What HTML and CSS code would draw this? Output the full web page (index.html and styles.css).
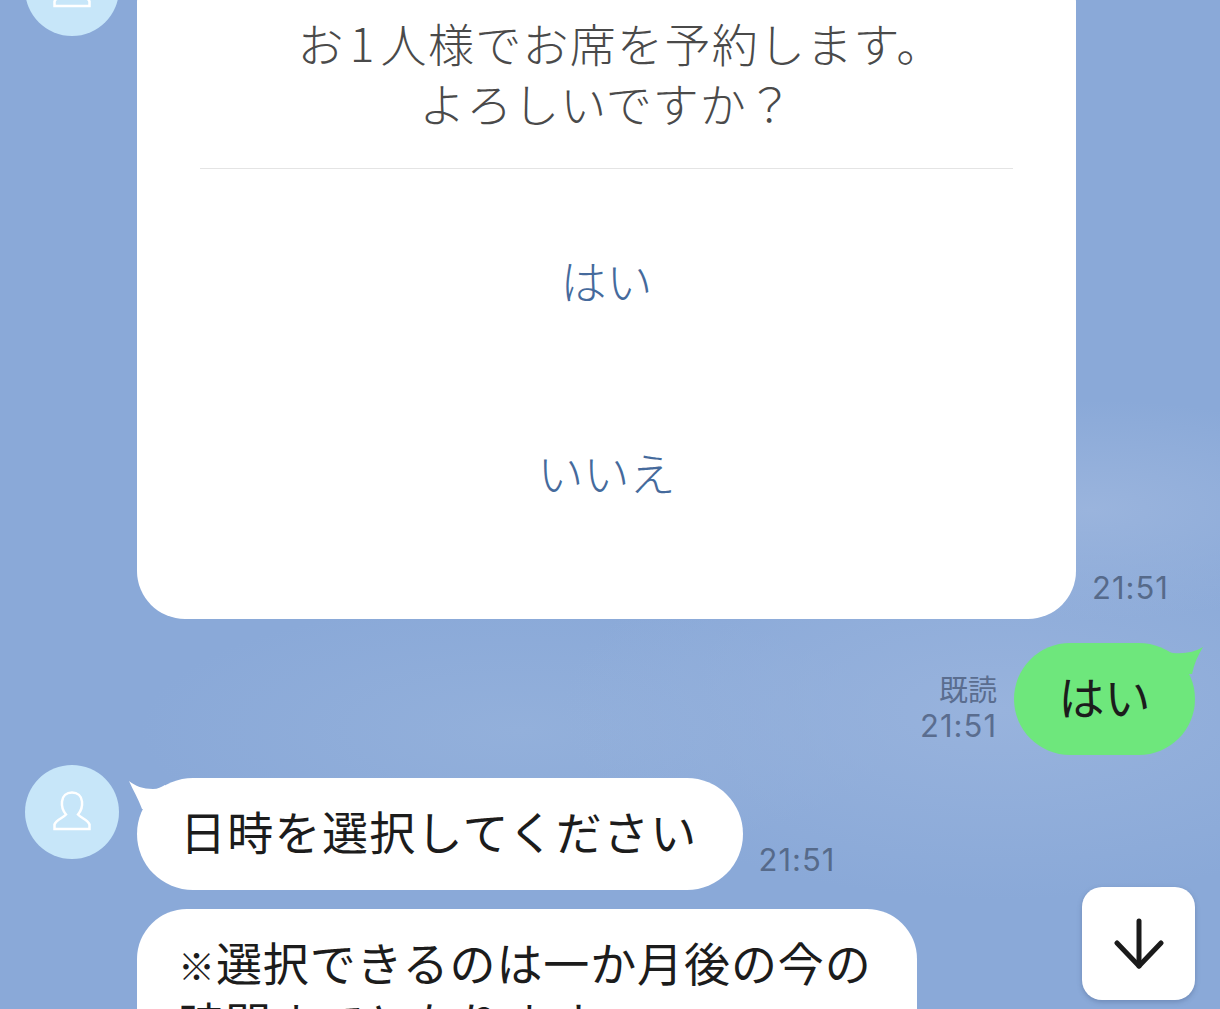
FILE: index.html
```html
<!DOCTYPE html>
<html lang="ja">
<head>
    <meta charset="UTF-8">
    <meta name="viewport" content="width=device-width, initial-scale=1.0">
    <title>トーク</title>
    <link rel="stylesheet" href="styles.css">
</head>
<body>
    <div id="chat-messages">
        <div class="row row-in">
            <div class="avatar">
                <svg width="94" height="94" viewBox="0 0 94 94" fill="none" stroke="white" stroke-width="2.5">
                    <path d="M29.5 64V59.5C31 55 38 53 41 49.5C38 46 36.5 41 37 36.5C37.5 31 41.5 27.5 47 27.5C52.5 27.5 56.5 31 57 36.5C57.5 41 56 46 53 49.5C56 53 63 55 64.5 59.5V64Z"/>
                </svg>
            </div>
            <div class="card">
                <p class="card-title"><span class="title-first">お<span class="num">1</span>人様でお席を予約します。</span><br>よろしいですか？</p>
                <div class="card-actions">
                    <button class="card-button">はい</button>
                    <button class="card-button">いいえ</button>
                </div>
            </div>
            <div class="time">21:51</div>
        </div>

        <div class="row row-out">
            <div class="read-info">
                <div>既読</div>
                <div class="read-time">21:51</div>
            </div>
            <div class="bubble bubble-green">
                <svg class="tail tail-right" width="40" height="32" viewBox="0 0 40 32">
                    <path d="M38 4C30 9 20 11 8 10C5 9.5 3 8 0 7V31H27C29 21 33 12 38 4Z"/>
                </svg>
                はい
            </div>
        </div>

        <div class="row row-in row-next">
            <div class="avatar">
                <svg width="94" height="94" viewBox="0 0 94 94" fill="none" stroke="white" stroke-width="2.5">
                    <path d="M29.5 64V59.5C31 55 38 53 41 49.5C38 46 36.5 41 37 36.5C37.5 31 41.5 27.5 47 27.5C52.5 27.5 56.5 31 57 36.5C57.5 41 56 46 53 49.5C56 53 63 55 64.5 59.5V64Z"/>
                </svg>
            </div>
            <div class="bubble bubble-white">
                <svg class="tail tail-left" width="40" height="32" viewBox="0 0 40 32">
                    <path d="M2 3C8 8 16 11 26 11C31 11 34 9 38 7V31H15C11 20 6 12 2 3Z"/>
                </svg>
                日時を選択してください
            </div>
            <div class="time time-short">21:51</div>
        </div>

        <div class="row row-follow">
            <div class="bubble bubble-white bubble-long"><span class="note-mark">※</span>選択できるのは一か月後の今の<br>時間までとなります</div>
        </div>
    </div>

    <button id="scroll-button">
        <svg width="50" height="52" viewBox="0 0 50 52" fill="none" stroke="#1a1a1a" stroke-width="5" stroke-linecap="round" stroke-linejoin="round">
            <path d="M25 3V48"/>
            <path d="M3 25L25 48L47 25"/>
        </svg>
    </button>
</body>
</html>
```

FILE: styles.css
```css
* {
    margin: 0;
    padding: 0;
    box-sizing: border-box;
    font-family: "Noto Sans CJK JP", "Noto Sans", sans-serif;
}

body {
    position: relative;
    height: 100vh;
    overflow: hidden;
    background-color: #8aa9d8;
    background-image:
        radial-gradient(ellipse 300px 110px at 1090px 510px, #9ab4dd, transparent),
        radial-gradient(ellipse 440px 190px at 1000px 710px, #98b3dd, transparent),
        radial-gradient(ellipse 380px 130px at 520px 730px, #93b0db, transparent);
}

#chat-messages {
    margin-top: -58px;
    padding: 0 25px;
}

.row {
    display: flex;
    align-items: flex-end;
}

.row-out {
    justify-content: flex-end;
    margin-top: 24px;
}

.row-next {
    margin-top: 10px;
}

.row-follow {
    margin-top: 19px;
    padding-left: 112px;
}

.avatar {
    flex: none;
    align-self: flex-start;
    width: 94px;
    height: 94px;
    margin-right: 18px;
    border-radius: 50%;
    background-color: #c7e6f9;
}

.card {
    width: 939px;
    margin-top: 13px;
    padding: 57px 63px 52px;
    border-radius: 48px;
    background-color: white;
}

.card-title {
    padding-bottom: 36px;
    border-bottom: 1px solid #e4e4e4;
    font-size: 46px;
    line-height: 60px;
    font-weight: 300;
    letter-spacing: 1px;
    color: #4a4a4a;
    text-align: center;
}

.title-first {
    margin-left: 28px;
    letter-spacing: 1.3px;
}

.num {
    margin: 0 5px;
}

.card-actions {
    padding-top: 14px;
}

.card-button {
    display: block;
    width: 100%;
    height: 192px;
    border: none;
    background: none;
    font-size: 46px;
    font-weight: 300;
    color: #456a9c;
    cursor: pointer;
}

.time {
    flex: none;
    margin: 0 0 13px 16px;
    font-family: Inter, "Noto Sans", sans-serif;
    font-size: 31px;
    line-height: 36px;
    letter-spacing: 1px;
    color: #566a8a;
}

.time-short {
    margin-bottom: 12px;
}

.read-info {
    margin: 0 17px 11px 0;
    font-size: 29px;
    line-height: 37px;
    color: #5a6d8f;
    text-align: right;
}

.read-time {
    font-family: Inter, "Noto Sans", sans-serif;
    font-size: 31px;
    letter-spacing: 1px;
}

.bubble {
    position: relative;
    font-size: 46px;
    line-height: 60px;
    color: #1c1c1c;
}

.bubble-green {
    display: flex;
    align-items: center;
    justify-content: center;
    width: 181px;
    height: 112px;
    padding-bottom: 8px;
    border-radius: 56px;
    background-color: #6ee77c;
}

.bubble-white {
    display: flex;
    align-items: center;
    height: 112px;
    margin-top: 13px;
    padding: 0 45px 8px 43px;
    border-radius: 56px;
    background-color: white;
    letter-spacing: 1.3px;
}

.bubble-long {
    display: block;
    width: 780px;
    height: auto;
    margin-top: 0;
    padding: 24px 30px 26px 41px;
    border-radius: 50px;
    line-height: 56px;
    letter-spacing: 0.9px;
}

.note-mark {
    font-size: 37px;
    font-weight: 700;
}

.tail {
    position: absolute;
    top: 0;
}

.tail-left {
    left: -10px;
    fill: white;
}

.tail-right {
    right: -10px;
    fill: #6ee77c;
}

#scroll-button {
    position: absolute;
    left: 1082px;
    top: 887px;
    display: flex;
    align-items: center;
    justify-content: center;
    width: 113px;
    height: 113px;
    border: none;
    border-radius: 20px;
    background-color: white;
    box-shadow: 0 2px 5px rgba(60, 80, 120, 0.35);
    cursor: pointer;
}
```
